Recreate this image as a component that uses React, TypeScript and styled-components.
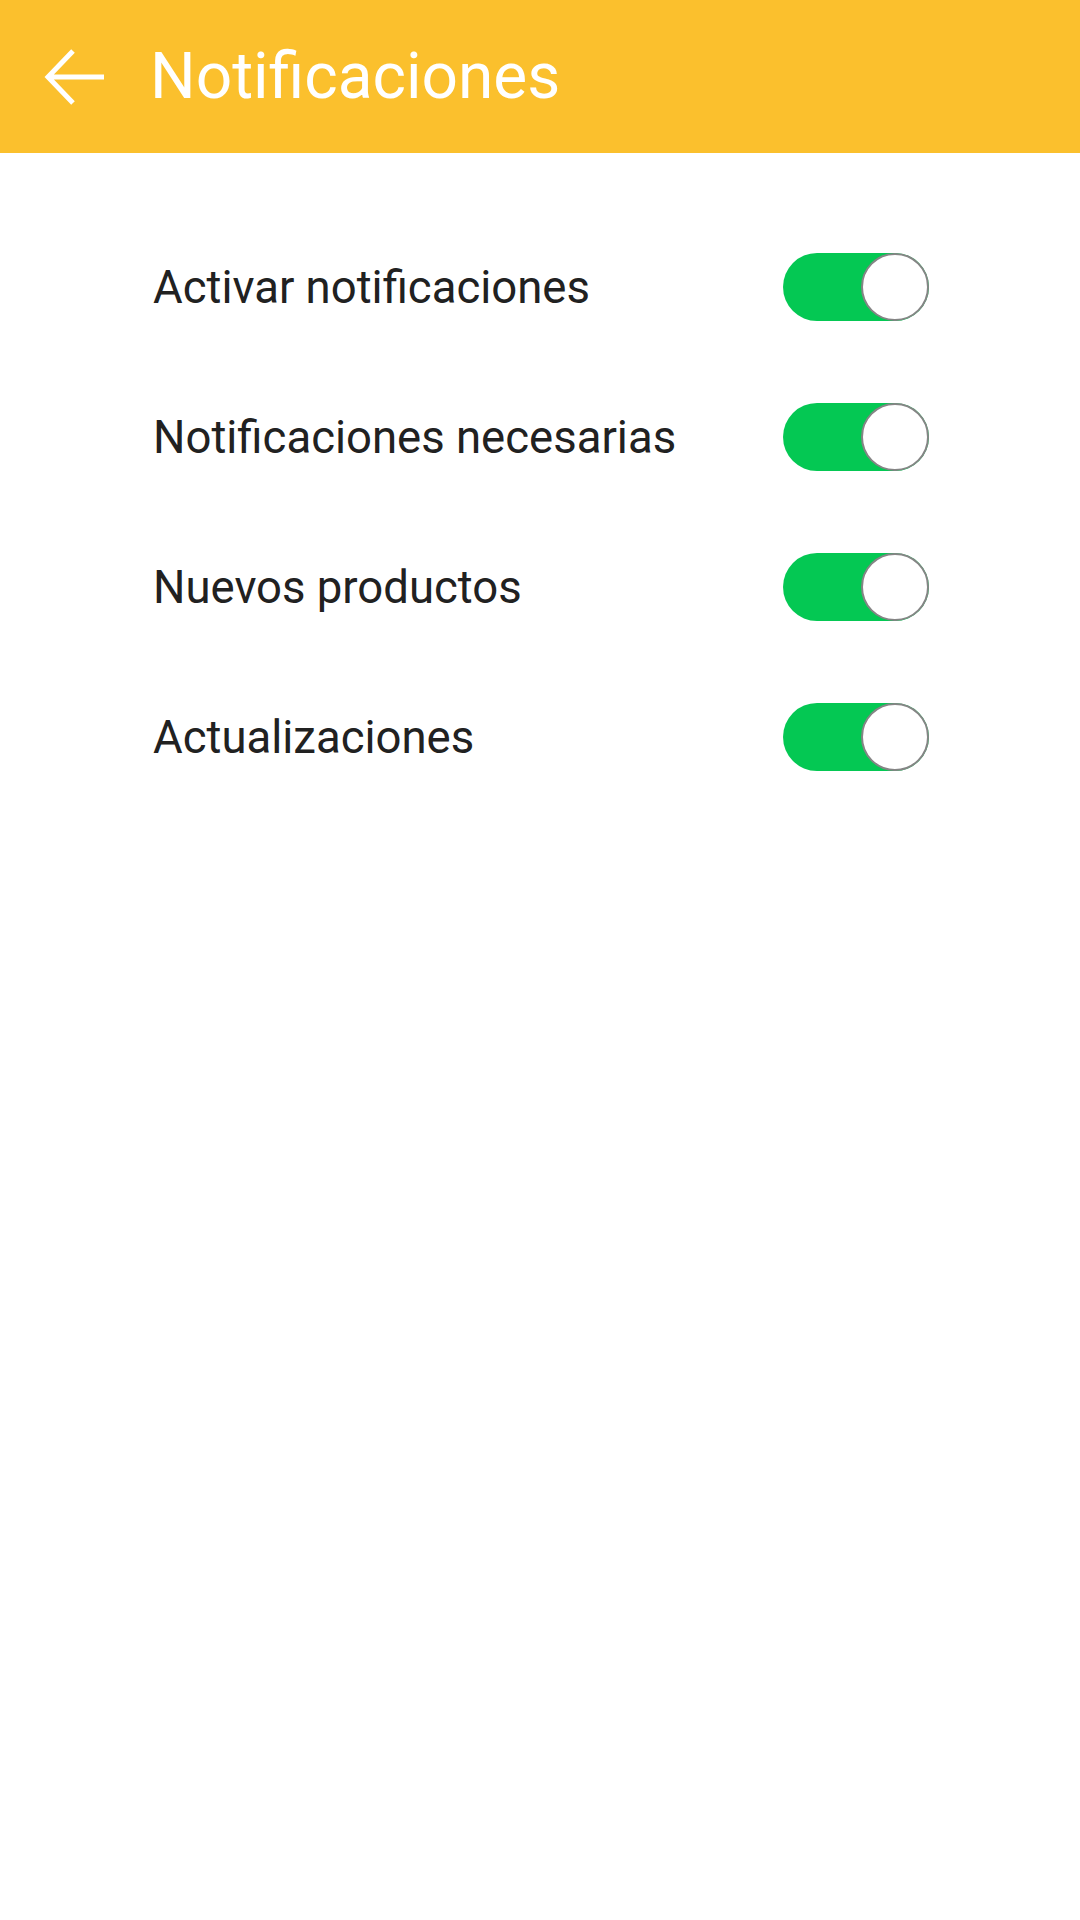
import React from "react";
import styled, { createGlobalStyle } from "styled-components";

const GlobalStyle = createGlobalStyle`
  html, body { margin: 0; padding: 0; background: #ffffff; }
  body { font-family: Roboto, "Noto Sans", sans-serif; }
`;

const Page = styled.div`
  width: 1080px;
  min-height: 1920px;
  background: #ffffff;
  display: flex;
  flex-direction: column;
`;

const AppBar = styled.header`
  height: 153px;
  background: #fbc02d;
  display: flex;
  align-items: center;
  padding-left: 44px;
  box-sizing: border-box;
`;

const BackButton = styled.button`
  width: 62px;
  height: 56px;
  padding: 0;
  border: none;
  background: transparent;
  display: flex;
  align-items: center;
  justify-content: center;
  margin-right: 44px;
  cursor: pointer;
`;

const Title = styled.h1`
  margin: 0;
  font-family: Roboto, sans-serif;
  font-weight: 400;
  font-size: 64px;
  color: #ffffff;
  letter-spacing: 0;
`;

const List = styled.main`
  display: flex;
  flex-direction: column;
  padding: 59px 151px 0 153px;
`;

const Row = styled.div`
  height: 150px;
  display: flex;
  align-items: center;
  justify-content: space-between;
`;

const Label = styled.span`
  font-family: Roboto, sans-serif;
  font-size: 45.5px;
  color: #212121;
`;

const Track = styled.div<{ $on: boolean }>`
  width: 146px;
  height: 68px;
  border-radius: 34px;
  background: ${(p) => (p.$on ? "#04c853" : "#cccccc")};
  display: flex;
  justify-content: ${(p) => (p.$on ? "flex-end" : "flex-start")};
  align-items: center;
`;

const Knob = styled.div`
  width: 68px;
  height: 68px;
  box-sizing: border-box;
  border-radius: 50%;
  background: #ffffff;
  border: 2px solid #858585;
`;

const items = [
  "Activar notificaciones",
  "Notificaciones necesarias",
  "Nuevos productos",
  "Actualizaciones",
];

export default function App() {
  return (
    <Page>
      <GlobalStyle />
      <AppBar>
        <BackButton aria-label="Volver">
          <svg width="62" height="56" viewBox="0 0 62 56">
            <path d="M60 28H4M29 2L4 28l25 26" fill="none" stroke="#ffffff" strokeWidth="5" />
          </svg>
        </BackButton>
        <Title>Notificaciones</Title>
      </AppBar>
      <List>
        {items.map((t) => (
          <Row key={t}>
            <Label>{t}</Label>
            <Track $on={true}>
              <Knob />
            </Track>
          </Row>
        ))}
      </List>
    </Page>
  );
}
